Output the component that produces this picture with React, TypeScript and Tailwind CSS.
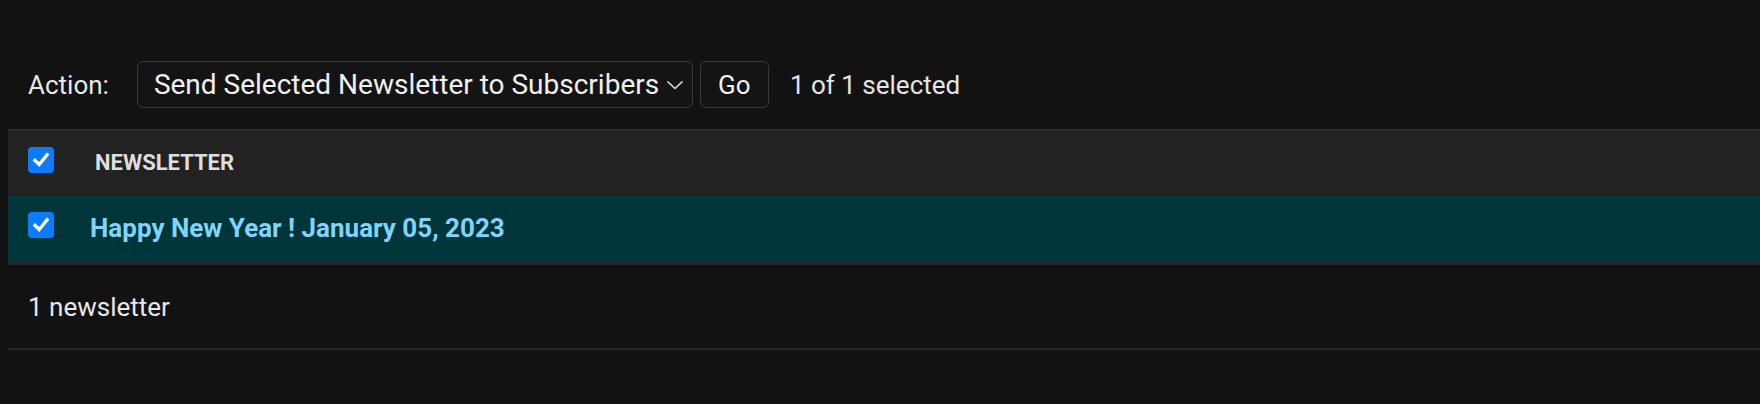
import React from "react";

function CheckBox() {
  return (
    <div className="w-[26px] h-[26px] rounded-[4px] bg-[#0b7bff] flex items-center justify-center shrink-0">
      <svg width="20" height="20" viewBox="0 0 20 20" fill="none">
        <path d="M4 10.5 L8.2 14.5 L16 4.8" stroke="#ffffff" strokeWidth="3.4" strokeLinecap="square" strokeLinejoin="miter" />
      </svg>
    </div>
  );
}

export default function App() {
  return (
    <div className="min-h-[404px] w-full bg-[#121212] font-['Roboto',sans-serif] text-[#eeeeee] overflow-hidden">
      <div className="pl-[8px] pt-[61px]">
        {/* Actions bar */}
        <div className="flex items-center h-[47px] pl-[20px]">
          <span className="text-[26px] leading-none text-[#e8e8e8]">Action:</span>
          <div className="ml-[28px] w-[556px] h-[47px] rounded-[6px] border border-[#3a3a3a] bg-[#141414] flex items-center pl-[16px] pr-[8px]">
            <span className="text-[28px] leading-none text-[#f0f0f0] whitespace-nowrap">
              Send Selected Newsletter to Subscribers
            </span>
            <svg className="ml-auto" width="18" height="12" viewBox="0 0 18 12" fill="none">
              <path d="M1.5 2.5 L9 9.5 L16.5 2.5" stroke="#e0e0e0" strokeWidth="1.6" />
            </svg>
          </div>
          <div className="ml-[7px] w-[69px] h-[47px] rounded-[6px] border border-[#3a3a3a] bg-[#141414] flex items-center justify-center">
            <span className="text-[26px] leading-none text-[#f0f0f0]">Go</span>
          </div>
          <span className="ml-[21px] text-[26px] leading-none text-[#e4e4e4]">1 of 1 selected</span>
        </div>

        {/* Table header */}
        <div className="mt-[21px] border-t-2 border-b-2 border-t-[#2a2a2a] border-b-[#1b2021] bg-[#222222] h-[67px] flex items-center pl-[20px]">
          <div className="-mt-[5px]">
            <CheckBox />
          </div>
          <span className="ml-[41px] text-[22px] font-bold leading-none text-[#dedede]">NEWSLETTER</span>
        </div>

        {/* Selected row */}
        <div className="bg-[#00363a] h-[69px] border-b-4 border-[#282828] flex items-center pl-[20px]">
          <div className="-mt-[7px]">
            <CheckBox />
          </div>
          <span className="ml-[36px] -mt-[2px] text-[26px] font-bold leading-none text-[#81d4fa] whitespace-nowrap">
            Happy New Year ! January 05, 2023
          </span>
        </div>

        {/* Paginator */}
        <div className="h-[85px] border-b-2 border-[#262626] flex items-center pl-[20px]">
          <span className="text-[26px] leading-none text-[#e8e8e8]">1 newsletter</span>
        </div>
      </div>
    </div>
  );
}
